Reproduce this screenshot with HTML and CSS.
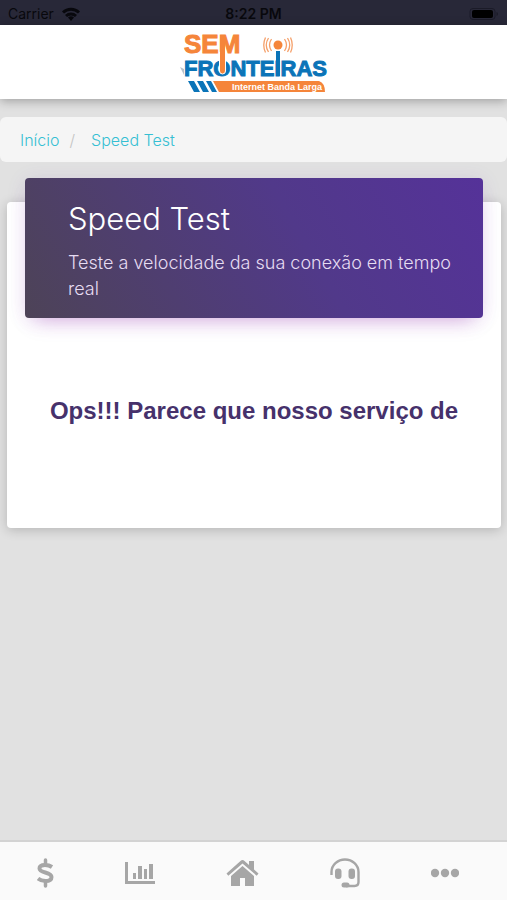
FILE: index.html
```html
<!DOCTYPE html>
<html lang="pt-BR">
  <head>
    <meta charset="UTF-8" />
    <meta name="viewport" content="width=device-width, initial-scale=1.0" />
    <title>Speed Test</title>
    <link rel="stylesheet" href="styles.css">
  </head>
  <body>
    <div class="status-bar">
      <div class="carrier">
        <span>Carrier</span>
        <svg width="18" height="14" viewBox="0 0 18 14" fill="none" stroke="#08080d" stroke-width="3">
          <path d="M1 5.5a11.5 11.5 0 0 1 16 0" />
          <path d="M4 9a7.5 7.5 0 0 1 10 0" />
          <path d="M6 10.5a4.5 4.5 0 0 1 6 0L9 14z" fill="#08080d" stroke="none" />
        </svg>
      </div>
      <span class="time">8:22 PM</span>
      <div class="battery">
        <svg width="30" height="12" viewBox="0 0 30 12">
          <rect x="1" y="0.5" width="25" height="11" rx="3" fill="none" stroke="#1b1b28" />
          <rect x="3" y="2" width="21" height="8" rx="2" fill="#000" />
          <path d="M27.500 4v4q1.500-.5 1.500-2t-1.500-2z" fill="#1b1b28" />
        </svg>
      </div>
    </div>

    <header class="header">
      <a href="#" aria-label="Sem Fronteiras">
        <svg class="logo" width="150" height="66" viewBox="0 0 150 66">
          <text class="logo-text" x="5" y="23" font-size="26" fill="#f5853a" stroke="#f5853a">SEM</text>
          <text class="logo-text" x="5" y="46" font-size="22" fill="#0b74b8" stroke="#0b74b8">FRONTEIRAS</text>
          <path d="M40.500 22h6v19q0 3-3 3t-3-3z" fill="#f5853a" stroke="#fff" stroke-width="1" />
          <path d="M41 5h5v18h-5z" fill="#f5853a" />
          <path d="M97 21h4v25h-4z" fill="#0b74b8" />
          <circle cx="99" cy="15" r="4.500" fill="#f5853a" />
          <path d="M92.500 9q-4 6 0 12M89.500 8q-4.500 7 0 14M86.500 7.500q-3.500 7.500 0 15M105.500 9q4 6 0 12M108.500 8q4.500 7 0 14M111.500 7.500q3.500 7.500 0 15" fill="none" stroke="#f5a06a" stroke-width="1.300" />
          <path d="M1 37l4 2v6z" fill="#b9c3cc" />
          <path d="M9 51h6l6 11h-6zM18 51h6l6 11h-6zM27 51h5l6 11h-5z" fill="#0b74b8" />
          <path d="M34 51h106q6 2 6 11H40z" fill="#f5853a" />
          <text class="logo-tag" x="53" y="60" font-size="9" fill="#fff">Internet Banda Larga</text>
        </svg>
      </a>
    </header>

    <main class="content">
      <nav class="breadcrumb" aria-label="breadcrumb">
        <a href="#">Início</a>
        <span class="separator">/</span>
        <a href="#">Speed Test</a>
      </nav>

      <section class="card">
        <div class="card-header">
          <h1>Speed Test</h1>
          <p>Teste a velocidade da sua conexão em tempo real</p>
        </div>
        <div class="card-body">
          <h2>Ops!!! Parece que nosso serviço de</h2>
        </div>
      </section>
    </main>

    <nav class="tab-bar" aria-label="Menu">
      <a href="#" aria-label="Financeiro">
        <svg width="17" height="30" viewBox="0 0 17 30" fill="none" stroke="#a6a6a6" stroke-width="4">
          <path d="M15 9Q12 7 8 7Q2.500 7 2.500 10.500C2.500 15.500 14.500 13.500 14.500 19Q14.500 23 8.500 23Q4 23 1 20.500" />
          <path d="M8.500 2v5M8.500 23v5" stroke-width="3.500" stroke-linecap="round" />
        </svg>
      </a>
      <a href="#" aria-label="Consumo">
        <svg width="30" height="24" viewBox="0 0 30 24" fill="#a6a6a6">
          <path d="M0 1h3v19h27v3H0zM8 12h3v6H8zM13 5h4v13h-4zM19 8h3v10h-3zM24 3h4v15h-4z" />
        </svg>
      </a>
      <a href="#" aria-label="Início">
        <svg width="33" height="28" viewBox="0 0 33 28" fill="#a6a6a6">
          <path d="M16.500 1Q17.500 1 18.500 2L23 6V2h5v8.500l4.500 4-1.800 2.200L16.500 4.500 2.300 16.700.5 14.500l14-12.500Q15.500 1 16.500 1z" />
          <path d="M16.500 7L28 17v10h-9v-8h-5v8H5V17z" />
        </svg>
      </a>
      <a href="#" aria-label="Suporte">
        <svg width="30" height="30" viewBox="0 0 30 30" fill="none" stroke="#a6a6a6" stroke-width="2.400">
          <path d="M1.500 17v-3a13.500 12.500 0 0 1 27 0v10q0 4-4 4H16" />
          <rect x="5" y="10.500" width="6.500" height="10.500" rx="3" fill="#a6a6a6" stroke="none" />
          <rect x="18.500" y="10.500" width="6.500" height="10.500" rx="3" fill="#a6a6a6" stroke="none" />
          <rect x="11.500" y="24.500" width="8" height="5" rx="2.500" fill="#a6a6a6" stroke="none" />
        </svg>
      </a>
      <a href="#" aria-label="Mais">
        <svg width="28" height="10" viewBox="1 0 28 10" fill="#a6a6a6">
          <circle cx="5" cy="5" r="4.200" />
          <circle cx="15" cy="5" r="4.200" />
          <circle cx="25" cy="5" r="4.200" />
        </svg>
      </a>
    </nav>
  </body>
</html>
```

FILE: styles.css
```css
* {
  margin: 0;
  padding: 0;
  box-sizing: border-box;
}

body {
  display: flex;
  flex-direction: column;
  min-height: 100vh;
  background: #e1e1e1;
  font-family: Inter, "Liberation Sans", Arial, sans-serif;
  font-weight: 300;
}

a {
  color: #35bfd3;
  text-decoration: none;
}

svg {
  display: block;
}

.status-bar {
  display: grid;
  grid-template-columns: 1fr auto 1fr;
  align-items: center;
  height: 25px;
  padding: 2px 8px 0;
  background: #282838;
  color: #08080d;
  font-size: 14px;
  font-weight: 400;
}

.carrier {
  display: flex;
  align-items: center;
  gap: 8px;
}

.time {
  font-weight: 600;
}

.battery {
  display: flex;
  justify-content: flex-end;
}

.header {
  display: flex;
  justify-content: center;
  padding: 5px 0 3px;
  background: #fff;
  box-shadow: 0 2px 10px rgba(0, 0, 0, 0.3);
}

.logo-text {
  font-family: "Liberation Sans", Arial, sans-serif;
  font-weight: 700;
  stroke-width: 1px;
}

.logo-tag {
  font-family: "Liberation Sans", Arial, sans-serif;
  font-weight: 700;
}

.content {
  flex: 1;
  padding-top: 18px;
}

.breadcrumb {
  display: flex;
  align-items: center;
  gap: 10px;
  height: 45px;
  padding: 0 20px;
  background: #f5f5f5;
  border-radius: 6px;
  font-size: 16px;
}

.separator {
  margin-right: 6px;
  color: #c4c4c4;
}

.card {
  min-height: 326px;
  margin: 40px 6px 0 7px;
  padding: 0 18px;
  background: #fff;
  border-radius: 4px;
  box-shadow: 0 2px 12px rgba(0, 0, 0, 0.2);
}

.card-header {
  position: relative;
  top: -24px;
  padding: 20px 32px 16px 43px;
  border-radius: 4px;
  background: linear-gradient(60deg, #4d4357, #51398a 60%, #553299);
  box-shadow: 0 10px 20px -10px rgba(156, 39, 176, 0.4), 0 2px 20px rgba(100, 50, 180, 0.1);
  color: #fff;
}

.card-header h1 {
  font-size: 31px;
  font-weight: 300;
  line-height: 42px;
}

.card-header p {
  margin-top: 10px;
  color: #e6dcf2;
  font-size: 18px;
  line-height: 26px;
}

.card-body {
  padding-top: 54px;
}

.card-body h2 {
  color: #46316b;
  font-family: "Liberation Sans", Arial, sans-serif;
  font-size: 24px;
  line-height: 30px;
  text-align: center;
  white-space: nowrap;
}

.tab-bar {
  display: flex;
  align-items: center;
  justify-content: space-between;
  height: 60px;
  padding: 4px 48px 0 37px;
  background: #fafafa;
  border-top: 2px solid #d3d3d3;
}
```
